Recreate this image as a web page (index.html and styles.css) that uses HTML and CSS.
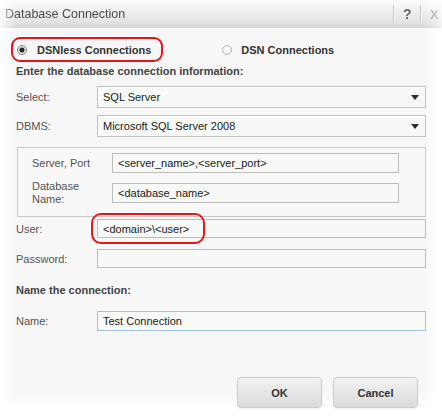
FILE: index.html
```html
<!DOCTYPE html>
<html>
<head>
<meta charset="utf-8">
<link rel="stylesheet" href="styles.css">
</head>
<body>
<div class="dialog">
  <div class="titlebar">
    <span class="title">Database Connection</span>
    <div class="tools">
      <span class="sep"></span>
      <span class="help">?</span>
      <span class="sep"></span>
      <span class="close">X</span>
    </div>
  </div>
  <div class="panel">
    <div class="modes">
      <div class="mode mode-on"><span class="radio radio-on"></span><span>DSNless Connections</span></div>
      <div class="mode mode-off"><span class="radio"></span><span>DSN Connections</span></div>
    </div>
    <div class="heading">Enter the database connection information:</div>
    <div class="row row-select">
      <span class="lbl">Select:</span>
      <div class="field select">SQL Server<span class="caret"></span></div>
    </div>
    <div class="row row-dbms">
      <span class="lbl">DBMS:</span>
      <div class="field select">Microsoft SQL Server 2008<span class="caret"></span></div>
    </div>
    <div class="group">
      <div class="grow">
        <span class="glbl">Server, Port</span>
        <div class="field ginput">&lt;server_name&gt;,&lt;server_port&gt;</div>
      </div>
      <div class="grow grow-tall">
        <span class="glbl">Database<br>Name:</span>
        <div class="field ginput">&lt;database_name&gt;</div>
      </div>
    </div>
    <div class="row row-user">
      <span class="lbl">User:</span>
      <div class="field input">&lt;domain&gt;\&lt;user&gt;</div>
      <span class="callout"></span>
    </div>
    <div class="row row-pass">
      <span class="lbl">Password:</span>
      <div class="field input"></div>
    </div>
    <div class="heading heading-name">Name the connection:</div>
    <div class="row row-name">
      <span class="lbl">Name:</span>
      <div class="field input focused">Test Connection</div>
    </div>
    <div class="buttons">
      <div class="btn">OK</div>
      <div class="btn">Cancel</div>
    </div>
  </div>
</div>
</body>
</html>
```

FILE: styles.css
```css
html, body {
  margin: 0;
  padding: 0;
  background: #ffffff;
}
body {
  font-family: "Liberation Sans", Arial, sans-serif;
  font-size: 11px;
  color: #555;
}
.dialog {
  width: 442px;
  height: 416px;
  overflow: hidden;
  display: flex;
  flex-direction: column;
}
.titlebar {
  height: 28px;
  flex: none;
  display: flex;
  align-items: center;
  background: linear-gradient(#fdfdfd 0%, #f1f1f1 35%, #e2e2e2 80%, #d5d5d5 100%);
  -webkit-mask-image: linear-gradient(to right, rgba(0,0,0,0.15) 0px, #000 16px, #000 424px, rgba(0,0,0,0.35) 442px);
  mask-image: linear-gradient(to right, rgba(0,0,0,0.15) 0px, #000 16px, #000 424px, rgba(0,0,0,0.35) 442px);
}
.title {
  padding-left: 5px;
  font-size: 12.5px;
  color: #4a4a4a;
  padding-bottom: 1px;
}
.tools {
  margin-left: auto;
  display: flex;
  align-items: center;
  gap: 9px;
  padding-right: 3px;
}
.sep {
  width: 1px;
  height: 18px;
  background: #c6c6c6;
  box-shadow: 1px 0 0 #f8f8f8;
}
.help {
  font-size: 14px;
  font-weight: bold;
  color: #666;
  width: 8px;
}
.close {
  font-size: 13px;
  font-weight: bold;
  color: #9a9a9a;
  width: 9px;
}
.panel {
  flex: 1;
  position: relative;
  padding: 0 16px;
  background: #f7f7f7;
  box-shadow: inset 12px 0 10px -4px #fff, inset -16px 0 10px -4px #fff, inset 0 -20px 12px -4px #fff;
}
.modes {
  margin-top: 9px;
  margin-left: -5px;
  display: flex;
  align-items: center;
  height: 25px;
}
.mode {
  display: flex;
  align-items: center;
  gap: 10px;
  font-weight: bold;
  color: #333;
  box-sizing: border-box;
  height: 25px;
}
.mode-on {
  border: 2px solid #e8141a;
  border-radius: 9px;
  padding: 0 10px 0 4px;
}
.mode-off {
  margin-left: 59px;
  gap: 9px;
}
.radio {
  width: 10px;
  height: 10px;
  box-sizing: border-box;
  border-radius: 50%;
  border: 1px solid #b9b9b9;
  background: radial-gradient(circle at 50% 40%, #ffffff 0%, #e6e6e6 100%);
  display: flex;
  align-items: center;
  justify-content: center;
}
.radio-on {
  border-color: #8a8a8a;
  background: radial-gradient(circle, #2b2b2b 0, #2b2b2b 2.2px, #d8d8d8 2.8px, #f4f4f4 100%);
}
.heading {
  margin-top: 2px;
  line-height: 14px;
  font-weight: bold;
  color: #444;
}
.row {
  display: flex;
  align-items: center;
  position: relative;
}
.lbl {
  width: 81px;
  flex: none;
  color: #555;
}
.field {
  box-sizing: border-box;
  flex: 1;
  display: flex;
  align-items: center;
  padding-left: 5px;
  border: 1px solid #bdbdbd;
  background: #f6f9f6;
  color: #222;
  white-space: nowrap;
}
.select {
  height: 22px;
  position: relative;
  border-color: #c0c0c0;
  box-shadow: inset 0 1px 0 #ffffff;
}
.caret {
  position: absolute;
  right: 6px;
  top: 8px;
  width: 0;
  height: 0;
  border-left: 4px solid transparent;
  border-right: 4px solid transparent;
  border-top: 5px solid #2a2a2a;
}
.row-select { margin-top: 8px; }
.row-dbms { margin-top: 7px; }
.group {
  margin-top: 10px;
  margin-left: 1px;
  border: 1px solid #c9c9c9;
  padding: 5px 0 10px 14px;
  background: #f8f8f8;
  display: flex;
  flex-direction: column;
  gap: 7px;
}
.grow {
  display: flex;
  align-items: center;
  height: 20px;
}
.grow-tall {
  height: 26px;
}
.glbl {
  width: 80px;
  flex: none;
  line-height: 13px;
  color: #555;
}
.ginput {
  flex: none;
  width: 287px;
  height: 20px;
}
.input {
  height: 19px;
}
.row-user { margin-top: 2px; }
.row-pass { margin-top: 11px; }
.heading-name { margin-top: 15px; }
.row-name { margin-top: 14px; }
.row-name .input { height: 20px; }
.focused {
  border-color: #9ec2e6;
  background: #f7faf7;
}
.callout {
  position: absolute;
  left: 75px;
  top: -6px;
  width: 114px;
  height: 31px;
  box-sizing: border-box;
  border: 2px solid #e8141a;
  border-radius: 10px;
}
.buttons {
  margin-top: 46px;
  margin-right: 8px;
  display: flex;
  justify-content: flex-end;
  gap: 11px;
}
.btn {
  width: 85px;
  height: 31px;
  box-sizing: border-box;
  border: 1px solid #cbcbcb;
  border-radius: 4px;
  background: linear-gradient(#f3f3f3 0%, #e6e6e6 50%, #dcdcdc 100%);
  box-shadow: 0 1px 2px rgba(0,0,0,0.08);
  display: flex;
  align-items: center;
  justify-content: center;
  font-weight: bold;
  color: #333;
}
```
